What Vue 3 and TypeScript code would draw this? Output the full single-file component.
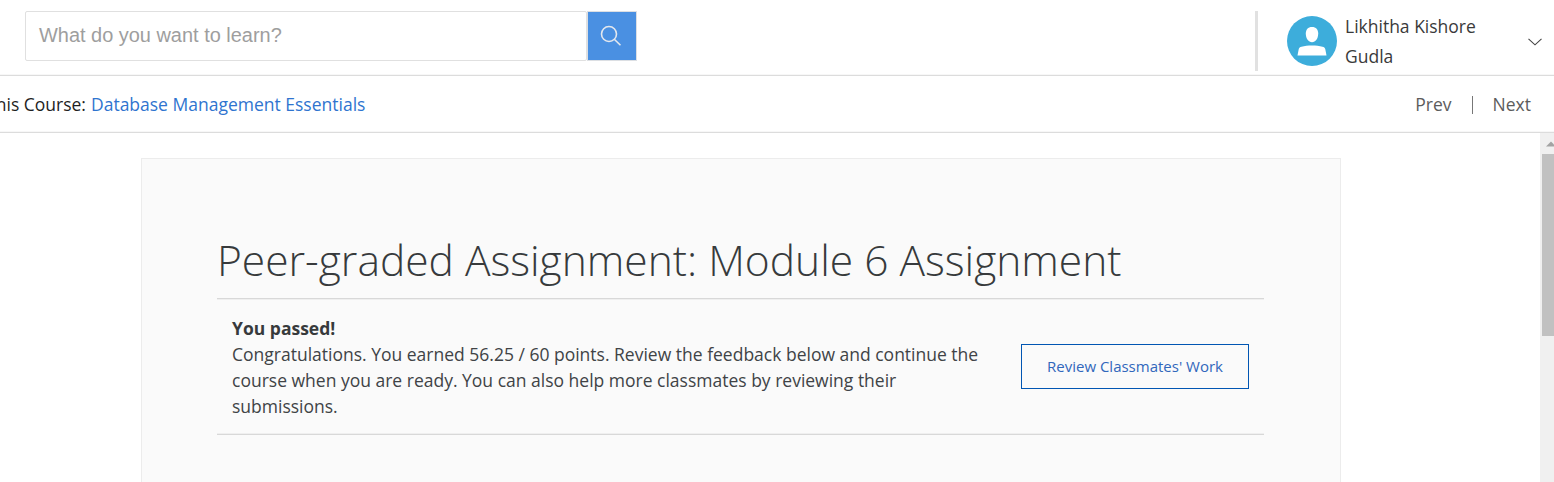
<script setup lang="ts">
const course = 'Database Management Essentials'
const userName = ['Likhitha Kishore', 'Gudla']
const feedback = [
  'Congratulations. You earned 56.25 / 60 points. Review the feedback below and continue the',
  'course when you are ready. You can also help more classmates by reviewing their',
  'submissions.',
]
</script>

<template>
  <div class="page">
    <header class="topbar">
      <div class="search">
        <div class="field"><span class="placeholder">What do you want to learn?</span></div>
        <button class="go" aria-label="Search">
          <svg width="48" height="48" viewBox="0 0 48 48" fill="none" stroke="#e4e8ee" stroke-width="1.6">
            <circle cx="21" cy="22" r="7.5" />
            <path d="M26.3 27.3 32.5 33.3" />
          </svg>
        </button>
      </div>
      <div class="account">
        <svg class="avatar" width="50" height="50" viewBox="0 0 50 50">
          <circle cx="25" cy="25" r="25" fill="#3daddb" />
          <path d="M25 11c4.100 0 6.200 2.700 6.200 6.500 0 4.900-2.700 8.700-6.200 8.700s-6.200-3.800-6.200-8.700c0-3.800 2.100-6.500 6.200-6.500Z" fill="#fff" />
          <path d="M10.500 39.500 11.700 33.300C12.100 31.700 13 31.200 14.500 30.800 20.500 28.900 29.500 28.900 35.500 30.800 37 31.200 37.900 31.700 38.300 33.300L39.500 39.500Z" fill="#fff" />
        </svg>
        <div class="name"><div v-for="part in userName" :key="part">{{ part }}</div></div>
        <svg class="chevron" width="14" height="8" viewBox="0 0 14 8" fill="none" stroke="#444" stroke-width="1.100">
          <path d="M.5.8 7 6.800 13.500.8" />
        </svg>
      </div>
    </header>

    <nav class="crumbs">
      <div class="crumb"><span class="lead">This Course:</span><a class="link">{{ course }}</a></div>
      <div class="pager"><a class="prev">Prev</a><i class="bar"></i><a class="next">Next</a></div>
    </nav>

    <main class="body">
      <section class="card">
        <h1 class="title">Peer-graded Assignment: Module 6 Assignment</h1>
        <div class="result">
          <div class="message">
            <strong class="passed">You passed!</strong>
            <div v-for="line in feedback" :key="line">{{ line }}</div>
          </div>
          <button class="review">Review Classmates' Work</button>
        </div>
      </section>
      <aside class="scroll">
        <svg class="arrow" width="12" height="6" viewBox="0 0 12 6"><path d="M0 5.500 5 .5 10 5.500Z" fill="#a3a3a3" /></svg>
        <div class="thumb"></div>
      </aside>
    </main>
  </div>
</template>

<style>
body { margin: 0; background: #fff; overflow: hidden; }
</style>

<style scoped>
.page {
  width: 1554px;
  height: 482px;
  display: flex;
  flex-direction: column;
  overflow: hidden;
  box-sizing: border-box;
  background: #fff;
  color: #404346;
  font: 17.5px/26px "Open Sans", sans-serif;
  white-space: nowrap;
}
.page * { box-sizing: border-box; }
button { font: inherit; padding: 0; margin: 0; background: none; border-radius: 0; }
.topbar {
  height: 76px;
  flex: none;
  display: flex;
  justify-content: space-between;
  padding: 11px 0 0 25px;
  border-bottom: 1px solid #dcdcdc;
  box-shadow: inset 0 -1px #f7f7f7;
}
.search { display: flex; height: 50px; }
.field {
  width: 562px;
  border: 1px solid #e0e0e0;
  border-radius: 2px;
  padding: 10px 0 0 13px;
}
.placeholder {
  display: block;
  font: 19.95px/26px "Liberation Sans", Arial, sans-serif;
  color: #9e9e9e;
}
.go { width: 50px; height: 50px; border: 1px solid #dcdfe3; background: #4a90e2; }
.go svg { display: block; }
.account {
  width: 299px;
  height: 60px;
  display: flex;
  border-left: 3px solid #e1e1e1;
  padding-left: 29px;
}
.avatar { margin-top: 5px; flex: none; }
.name { width: 183px; margin-left: 8px; line-height: 30px; color: #3a3a3a; }
.chevron { margin-top: 27px; flex: none; }
.crumbs {
  height: 57px;
  flex: none;
  display: flex;
  justify-content: space-between;
  padding: 15px 23px 0 0;
  border-bottom: 1px solid #dcdcdc;
  box-shadow: inset 0 -1px #f7f7f7;
}
.crumb { display: flex; width: 365.4px; justify-content: flex-end; color: #1f1f1f; }
.link { margin-left: 5px; color: #2f74cf; }
.pager { display: flex; align-items: flex-start; color: #5c5c5c; }
.bar { width: 1px; height: 18px; background: #777; margin: 5px 20px 0; }
.body { flex: 1; display: flex; justify-content: space-between; min-height: 0; }
.card {
  width: 1200px;
  margin: 25px 0 0 141px;
  padding: 69px 76px 0 75px;
  border: 1px solid #ececec;
  border-bottom: 0;
  background: #fafafa;
}
.title {
  margin: 0;
  height: 70px;
  font-size: 42.5px;
  line-height: 64px;
  font-weight: 300;
  color: #373a3c;
}
.result {
  height: 137px;
  display: flex;
  justify-content: space-between;
  align-items: flex-start;
  padding: 16px 15px 0;
  border-top: 1px solid #d8d8d8;
  border-bottom: 1px solid #d8d8d8;
  box-shadow: inset 0 1px #efefef, inset 0 -1px #efefef;
}
.passed { display: block; font-weight: 700; color: #373a3c; }
.review {
  width: 228px;
  height: 45px;
  margin-top: 29px;
  padding-bottom: 2px;
  border: 1px solid #0156b3;
  color: #3167bc;
  font-size: 15px;
}
.scroll { width: 14px; background: #f0f0f0; padding-left: 2px; overflow: hidden; }
.arrow { display: block; margin: 8px 0 0 4px; }
.thumb { height: 182px; margin-top: 7px; background: #c1c1c1; }
</style>
